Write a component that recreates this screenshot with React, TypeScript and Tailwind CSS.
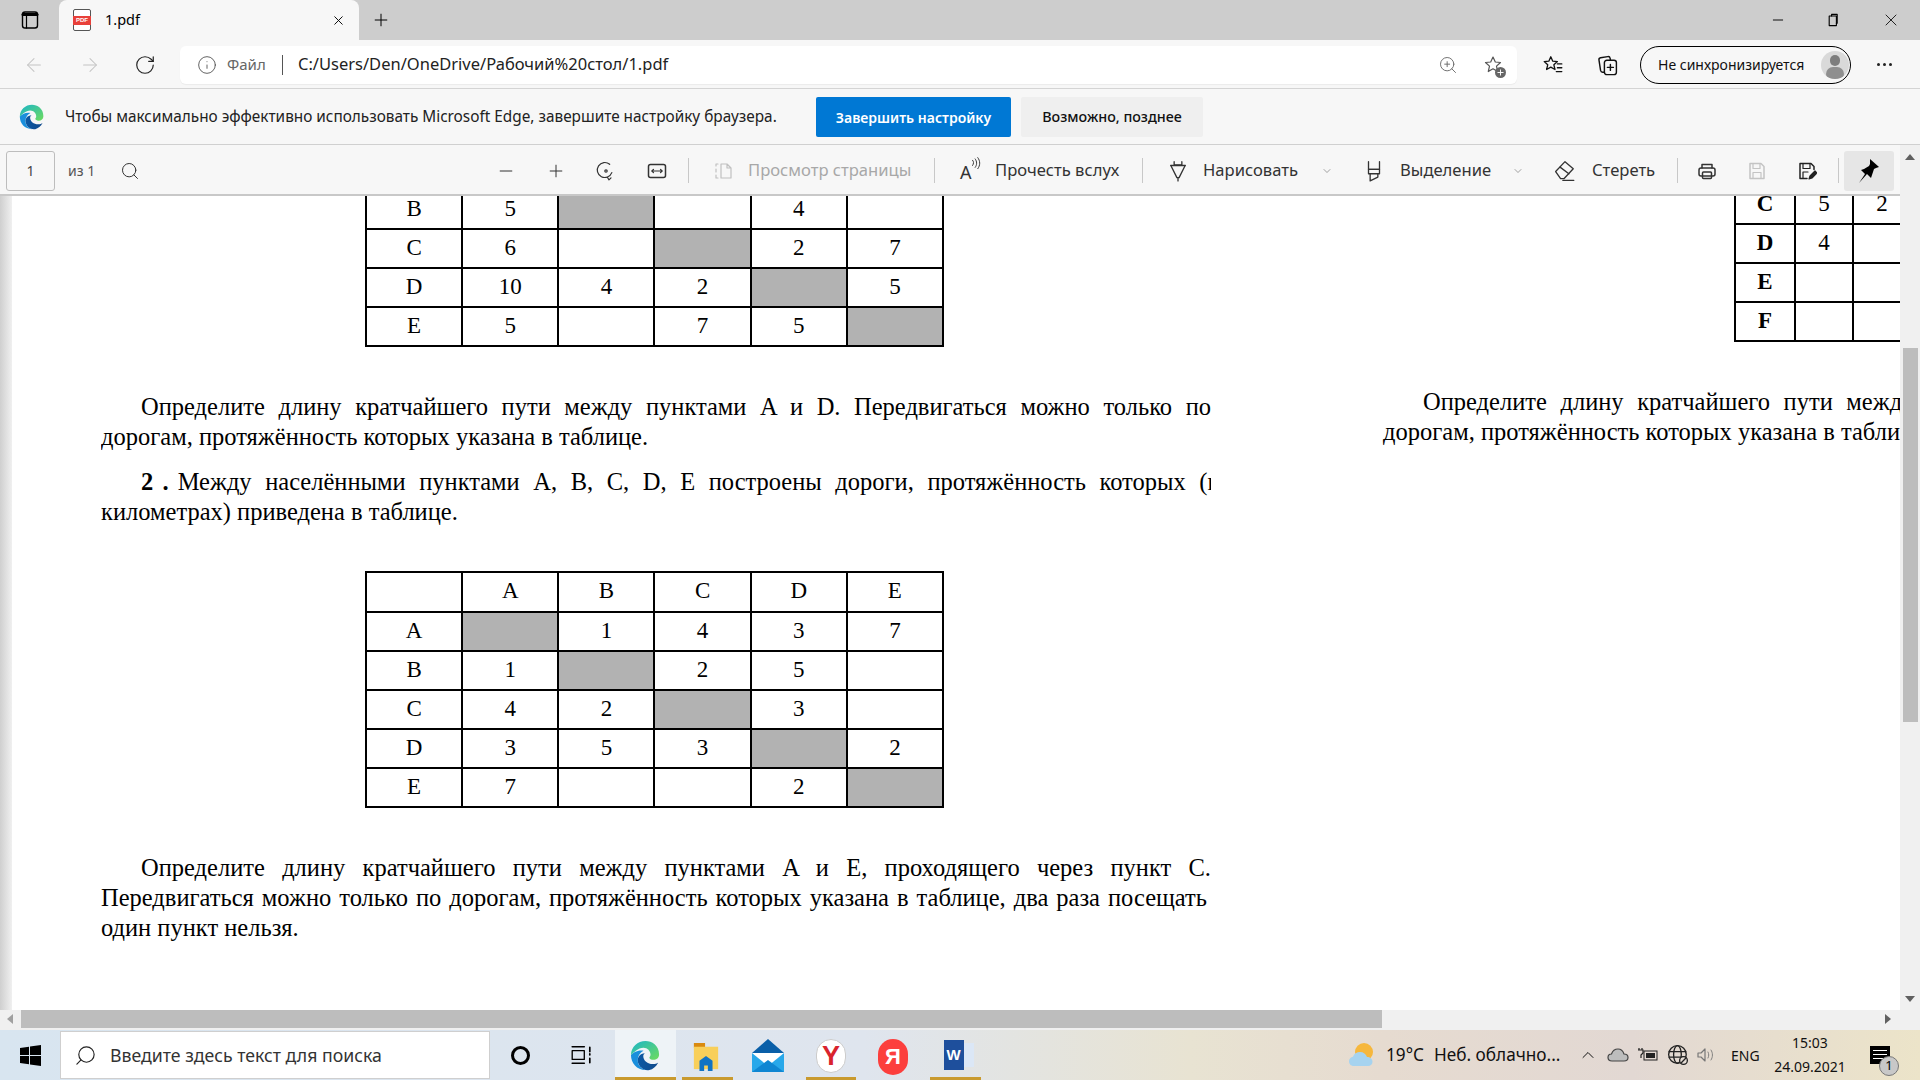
import type { ReactNode } from "react";
import { ArrowLeft, ArrowRight, RotateCw, Info, ZoomIn, Minus, Plus, Search, ChevronDown, ChevronUp, X } from "lucide-react";

const UI_FONT = "font-['Noto_Sans',sans-serif]";
const SERIF = "font-['Liberation_Serif',serif]";

function Ico({ children, size = 20, className = "" }: { children: ReactNode; size?: number; className?: string }) {
  return (
    <svg
      width={size}
      height={size}
      viewBox="0 0 20 20"
      fill="none"
      stroke="currentColor"
      strokeWidth="1.2"
      strokeLinecap="round"
      strokeLinejoin="round"
      className={`shrink-0 ${className}`}
    >
      {children}
    </svg>
  );
}

function EdgeLogo({ size = 28 }: { size?: number }) {
  return (
    <svg width={size} height={size} viewBox="0 0 32 32" className="shrink-0">
      <defs>
        <linearGradient id="edgeTop" x1="0" y1="0" x2="1" y2="1">
          <stop offset="0" stopColor="#1bb5c9" />
          <stop offset="1" stopColor="#6fdc5c" />
        </linearGradient>
        <linearGradient id="edgeLow" x1="0" y1="0" x2="1" y2="0">
          <stop offset="0" stopColor="#0c59a4" />
          <stop offset="1" stopColor="#114a8b" />
        </linearGradient>
      </defs>
      <path d="M1 15.5C1 24 7 31 16 31 10 29 8 25 8 21 8 15 12 12 14 11 8 10 3 13 1 15.5z" fill="#1a8fdc" />
      <path d="M29 23.5c-.5.3-1 .5-1.5.7-1.3.5-2.6.7-4 .7-5.2 0-9.8-3.6-9.8-8.1 0-1.3.7-2.4 1.8-3C10 14 8 18 8 21c0 4 2.5 7.5 6 9.2 2 .9 4 1.3 6 .8 3.6-.7 7-3.5 9-7.5z" fill="url(#edgeLow)" />
      <path d="M1 15.5C1 7 8 1 16 1c6.5 0 14 4.5 14 14 0 3.5-2.5 5.5-6 5.5-2 0-4-1-4-2.2 0-.8 1.2-1.3 1.2-3.3C21.2 11.5 18 8 14 8 8 8 4 13 1 15.5z" fill="url(#edgeTop)" />
    </svg>
  );
}

function TabBar() {
  return (
    <div className="flex h-10 items-center bg-[#cdcdcd] text-black">
      <Ico size={20} className="ml-5">
        <rect x="2.5" y="2" width="15" height="16" rx="2.5" strokeWidth="1.4" />
        <path d="M3 4.5h14" strokeWidth="3" />
        <path d="M6.5 5v13" />
      </Ico>
      <div className="ml-[19px] flex h-10 w-[300px] items-center self-end rounded-t-lg bg-[#f7f7f7]">
        <div className="relative ml-[14px] h-[22px] w-[18px] rounded-[2px] border border-[#555] bg-white">
          <span className="absolute left-[-1px] top-[6px] w-[18px] bg-[#e8403a] text-center font-['Liberation_Sans',sans-serif] text-[6px] font-bold leading-[9px] text-white">
            PDF
          </span>
        </div>
        <span className="ml-[14px] w-[216px] text-[14.5px]">1.pdf</span>
        <X size={15} strokeWidth={1.5} className="ml-[10px]" />
      </div>
      <Plus size={20} strokeWidth={1.2} className="ml-[12px]" />
      <Minus size={16} strokeWidth={1.4} className="ml-[1379px]" />
      <Ico size={16} className="ml-[40px]">
        <rect x="4" y="5" width="9" height="12" strokeWidth="1.4" />
        <path d="M7 5V3h7v11h-1" strokeWidth="1.4" />
      </Ico>
      <X size={20} strokeWidth={1} className="ml-[39px]" />
    </div>
  );
}

function AddressBar() {
  return (
    <div className="flex h-[49px] items-center border-b border-[#d4d4d4] bg-[#f7f7f7] pt-[1px]">
      <ArrowLeft size={22} strokeWidth={1.1} className="ml-[23px] text-[#c4c4c4]" />
      <ArrowRight size={22} strokeWidth={1.1} className="ml-[34px] text-[#c4c4c4]" />
      <RotateCw size={22} strokeWidth={1.3} className="ml-[33px] text-[#222]" />
      <div className="ml-[24px] flex h-[38px] w-[1337px] items-center rounded-md bg-white shadow-[0_1px_1px_rgba(0,0,0,0.05)]">
        <Info size={20} strokeWidth={1} className="ml-[17px] text-[#444]" />
        <span className="ml-[10px] w-[44px] text-[15px] text-[#666]">Файл</span>
        <span className="ml-[11px] h-5 w-px bg-[#555]" />
        <span className="ml-[15px] w-[1060px] text-[16.5px] text-[#222]">C:/Users/Den/OneDrive/Рабочий%20стол/1.pdf</span>
        <ZoomIn size={20} strokeWidth={1.1} className="ml-[80px] text-[#666]" />
        <div className="relative ml-[25px] h-5 w-5 text-[#555]">
          <Ico>
            <path d="M10 2l2.3 5 5.2.5-4 3.6 1.2 5.4L10 13.8 5.3 16.5l1.2-5.4-4-3.6L7.7 7z" />
          </Ico>
          <span className="absolute bottom-[-3px] right-[-3px] h-[11px] w-[11px] rounded-full bg-[#666]" />
          <Plus size={9} strokeWidth={2.5} className="absolute bottom-[-2px] right-[-2px] text-white" />
        </div>
      </div>
      <Ico size={22} className="ml-[25px] text-[#111]">
        <path d="M8 2.5l1.8 4 4.2.4-3.2 2.9 1 4.3L8 12l-3.8 2.1 1-4.3L2 6.9l4.2-.4z" />
        <path d="M14 9h4M14 12.5h4M13 16h5" />
      </Ico>
      <Ico size={24} className="ml-[32px] text-[#111]">
        <rect x="7" y="6" width="10" height="12" rx="2" />
        <path d="M7 16H5.500c-1 0-1.500-.6-1.700-1.500L2.500 6c-.2-1 .4-1.800 1.300-2l6-1c1-.1 1.800.4 2 1.400L12 6" />
        <path d="M12 9.500v5M9.500 12h5" />
      </Ico>
      <div className="ml-[20px] flex h-[38px] w-[211px] items-center rounded-full border-[1.5px] border-black">
        <span className="ml-[17px] w-[164px] whitespace-nowrap text-[14px] text-[#111]">Не синхронизируется</span>
        <div className="relative ml-[-1px] h-7 w-7 overflow-hidden rounded-full bg-[#d9d9d9]">
          <span className="absolute left-[9px] top-[4px] h-[11px] w-[10px] rounded-full bg-[#7d7d7d]" />
          <span className="absolute left-[5px] top-[16px] h-[14px] w-[18px] rounded-full bg-[#8f8f8f]" />
        </div>
      </div>
      <div className="ml-[26px] flex gap-[3px]">
        <span className="h-[3px] w-[3px] rounded-full bg-[#222]" />
        <span className="h-[3px] w-[3px] rounded-full bg-[#222]" />
        <span className="h-[3px] w-[3px] rounded-full bg-[#222]" />
      </div>
    </div>
  );
}

function Banner() {
  return (
    <div className="flex h-[56px] items-center border-b border-[#d0d0d0] bg-[#f7f7f7] pt-[1px]">
      <div className="ml-[19px]">
        <EdgeLogo size={26} />
      </div>
      <span className="ml-[20px] w-[751px] whitespace-nowrap text-[15.35px] text-[#222]">
        Чтобы максимально эффективно использовать Microsoft Edge, завершите настройку браузера.
      </span>
      <button className="flex h-10 w-[195px] items-center justify-center rounded-[2px] bg-[#0078d4] text-[14px] font-semibold text-white">
        Завершить настройку
      </button>
      <button className="ml-[10px] flex h-10 w-[182px] items-center justify-center rounded-[2px] bg-[#efefef] text-[14.3px] font-medium text-[#111]">
        Возможно, позднее
      </button>
    </div>
  );
}

function Sep({ className }: { className: string }) {
  return <span className={`h-[25px] w-px bg-[#c8c8c8] ${className}`} />;
}

function PdfToolbar() {
  return (
    <div className="flex h-[51px] items-center border-b-2 border-[#c8c8c8] bg-[#f7f7f7] pt-[2px] text-[16.6px] text-[#333]">
      <div className="ml-[6px] flex h-10 w-[49px] items-center justify-center rounded-[3px] border border-[#bdbdbd] text-[14px] text-[#444]">
        1
      </div>
      <span className="ml-[13px] w-[26px] whitespace-nowrap text-[14px] text-[#555]">из 1</span>
      <Search size={20} strokeWidth={1.2} className="ml-[26px] text-[#333]" />
      <Minus size={20} strokeWidth={1.2} className="ml-[356px]" />
      <Plus size={20} strokeWidth={1.2} className="ml-[30px]" />
      <Ico className="ml-[30px]">
        <path d="M8.500 2.500a7.500 7.500 0 1 0 7 5" transform="rotate(40 10 10)" />
        <path d="M11.500 16.500l1.500 2.300 2-2" />
        <circle cx="10" cy="10" r="1.200" />
      </Ico>
      <Ico className="ml-[31px]">
        <rect x="1.5" y="3.5" width="17" height="13" rx="2" strokeWidth="1.5" />
        <path d="M5 10h10M6.5 8.300L4.800 10l1.700 1.700M13.500 8.300l1.700 1.700-1.700 1.700" />
      </Ico>
      <Sep className="ml-[21px]" />
      <Ico className="ml-[24px] text-[#c0c0c0]">
        <path d="M8 3h6l4 4v10H8zM14 3v4h4" />
        <path d="M5 3H3v2M3 8v3M3 14v3h2" />
      </Ico>
      <span className="ml-[15px] w-[164px] whitespace-nowrap text-[#a8a8a8]">Просмотр страницы</span>
      <Sep className="ml-[22px]" />
      <div className="relative ml-[25px] h-5 w-5">
        <span className="absolute left-0 top-[-1px] text-[18px] leading-6">A</span>
        <Ico size={13} className="absolute right-[-3px] top-[-4px]">
          <path d="M4 5c2 2 2 5 0 8M8 3c3 4 3 9 0 13M12 1c4 5 4 12 0 17" strokeWidth="1.500" />
        </Ico>
      </div>
      <span className="ml-[15px] w-[125px] whitespace-nowrap">Прочесть вслух</span>
      <Sep className="ml-[22px]" />
      <Ico size={22} className="ml-[24px]">
        <path d="M6.500 1.500v3h7v-3" />
        <path d="M3.500 5h13" />
        <path d="M3.500 5l5.500 11h2l5.500-11" />
        <path d="M10 16v3" />
      </Ico>
      <span className="ml-[14px] w-[94px] whitespace-nowrap">Нарисовать</span>
      <ChevronDown size={12} strokeWidth={1.2} className="ml-[24px] text-[#666]" />
      <Ico size={22} className="ml-[30px]">
        <path d="M5 1.500v7h10v-7" />
        <path d="M5 8.500h10M5 8.500v4h10v-4" />
        <path d="M6.500 12.500v6.500l7-3.500v-3" />
      </Ico>
      <span className="ml-[15px] w-[89px] whitespace-nowrap">Выделение</span>
      <ChevronDown size={12} strokeWidth={1.2} className="ml-[23px] text-[#666]" />
      <Ico size={22} className="ml-[30px]">
        <path d="M1.500 10.500L10 1.500l7.500 6.500-8.500 9-3 0z" />
        <path d="M5.500 6.500l8 6" />
        <path d="M8 18.500h10" />
      </Ico>
      <span className="ml-[16px] w-[62px] whitespace-nowrap">Стереть</span>
      <Sep className="ml-[23px]" />
      <Ico className="ml-[19px]">
        <path d="M5 7V3.500h10V7" strokeWidth="1.5" />
        <rect x="2" y="7" width="16" height="8" rx="2" strokeWidth="1.5" />
        <rect x="5.5" y="11" width="9" height="6.5" rx="1" strokeWidth="1.5" />
      </Ico>
      <Ico className="ml-[30px] text-[#c4c4c4]">
        <path d="M3 2.500h11l3 3v12H3z" strokeWidth="1.5" />
        <path d="M6 2.500v5h7v-5M6 17.500v-6h8v6" />
      </Ico>
      <Ico className="ml-[30px] text-[#222]">
        <path d="M10 17.500H3v-15h11l3 3v3" strokeWidth="1.5" />
        <path d="M6 2.500v5h7v-5M6 17v-6h5" />
        <path d="M12 18l1-3 5-5 2 2-5 5z" fill="currentColor" />
      </Ico>
      <Sep className="ml-[21px]" />
      <div className="ml-[5px] flex h-10 w-[50px] items-center justify-center rounded-[3px] bg-[#e6e6e6]">
        <svg width="24" height="26" viewBox="0 0 24 26" className="text-black">
          <path d="M13 1l9 8-3 1-2 1-2 6-1 3-4-4-8 9 6-9-4-4 3-1 5-3 1-2z" fill="currentColor" />
        </svg>
      </div>
    </div>
  );
}

function TableRows({ rows, gray, bold = false }: { rows: string[][]; gray: number[]; bold?: boolean }) {
  return (
    <>
      {rows.map((row, r) => (
        <tr key={r}>
          {row.map((cell, c) => (
            <td
              key={c}
              className={`border-2 border-black p-0 pb-[2px] text-center ${c === gray[r] ? "bg-[#b2b2b2]" : ""} ${
                bold && c === 0 ? "font-bold" : ""
              }`}
            >
              {cell}
            </td>
          ))}
        </tr>
      ))}
    </>
  );
}

function Line({ children, width = 1110, first = false, last = false }: { children: ReactNode; width?: number; first?: boolean; last?: boolean }) {
  return (
    <div
      style={{ width }}
      className={`h-[29.6px] text-justify leading-[29.6px] ${first ? "indent-[40px]" : ""} ${
        last ? "" : "[text-align-last:justify]"
      }`}
    >
      {children}
    </div>
  );
}

function LeftPage() {
  return (
    <div className={`-mt-[7px] w-[1371px] shrink-0 pl-[89px] text-[24.5px] text-black ${SERIF}`}>
      <table className="ml-[264px] h-[158px] w-[579px] table-fixed border-collapse text-[23px] leading-none">
        <tbody>
          <TableRows
            rows={[
              ["B", "5", "", "", "4", ""],
              ["C", "6", "", "", "2", "7"],
              ["D", "10", "4", "2", "", "5"],
              ["E", "5", "", "7", "5", ""],
            ]}
            gray={[2, 3, 4, 5]}
          />
        </tbody>
      </table>
      <div className="mt-[45px] w-[1110px] overflow-hidden">
        <Line first>Определите длину кратчайшего пути между пунктами A и D. Передвигаться можно только по</Line>
        <Line last>дорогам, протяжённость которых указана в таблице.</Line>
      </div>
      <div className="mt-[16px] w-[1110px] overflow-hidden">
        <Line first width={1118}>
          <span className="inline-block indent-0 [word-spacing:3px]">
            <b>2 .</b> Между
          </span>{" "}
          населёнными пунктами A, B, C, D, E построены дороги, протяжённость которых (в
        </Line>
        <Line last>километрах) приведена в таблице.</Line>
      </div>
      <table className="ml-[264px] mt-[45px] h-[237px] w-[579px] table-fixed border-collapse text-[23px] leading-none">
        <tbody>
          <TableRows
            rows={[
              ["", "A", "B", "C", "D", "E"],
              ["A", "", "1", "4", "3", "7"],
              ["B", "1", "", "2", "5", ""],
              ["C", "4", "2", "", "3", ""],
              ["D", "3", "5", "3", "", "2"],
              ["E", "7", "", "", "2", ""],
            ]}
            gray={[-1, 1, 2, 3, 4, 5]}
          />
        </tbody>
      </table>
      <div className="mt-[45px] w-[1110px]">
        <Line first>Определите длину кратчайшего пути между пунктами A и E, проходящего через пункт C.</Line>
        <Line width={1106}>Передвигаться можно только по дорогам, протяжённость которых указана в таблице, два раза посещать</Line>
        <Line last>один пункт нельзя.</Line>
      </div>
    </div>
  );
}

function RightPage() {
  return (
    <div className={`-mt-[12px] w-[1110px] shrink-0 text-[24.5px] text-black ${SERIF}`}>
      <table className="ml-[351px] h-[158px] w-[300px] table-fixed border-collapse text-[23px] leading-none">
        <colgroup>
          <col className="w-[60px]" />
          <col className="w-[58px]" />
          <col className="w-[58px]" />
          <col className="w-[124px]" />
        </colgroup>
        <tbody>
          <TableRows
            rows={[
              ["C", "5", "2", ""],
              ["D", "4", "", ""],
              ["E", "", "", ""],
              ["F", "", "", ""],
            ]}
            gray={[-1, -1, -1, -1]}
            bold
          />
        </tbody>
      </table>
      <div className="mt-[45px]">
        <Line first>Определите длину кратчайшего пути между пунктами A и D. Передвигаться можно только по</Line>
        <Line last>дорогам, протяжённость которых указана в таблице.</Line>
      </div>
    </div>
  );
}

function VScroll() {
  return (
    <div className="flex w-5 flex-col items-center bg-[#f0f0f0] pt-[9px]">
      <ChevronUpTri />
      <div className="mt-[188px] h-[374px] w-[15px] bg-[#bdbdbd]" />
      <div className="mt-auto mb-[8px] h-0 w-0 border-x-[5px] border-t-[6px] border-x-transparent border-t-[#606060]" />
    </div>
  );
}

function ChevronUpTri() {
  return <div className="h-0 w-0 border-x-[5px] border-b-[6px] border-x-transparent border-b-[#606060]" />;
}

function HScroll() {
  return (
    <div className="flex h-5 items-start bg-[#f0f0f0]">
      <div className="ml-[7px] mt-[4px] h-0 w-0 border-y-[5px] border-r-[6px] border-y-transparent border-r-[#a0a0a0]" />
      <div className="ml-[8px] h-[18px] w-[1361px] bg-[#bdbdbd]" />
      <div className="ml-[503px] mt-[4px] h-0 w-0 border-y-[5px] border-l-[6px] border-y-transparent border-l-[#606060]" />
    </div>
  );
}

function TrayIcons() {
  return (
    <>
      <svg width="30" height="30" viewBox="0 0 30 30" className="ml-[366px] shrink-0">
        <circle cx="17" cy="12" r="9" fill="#f6b73c" />
        <path d="M7 26c-3.500 0-5-2.500-5-4.800 0-2.400 1.800-4.200 4-4.500C7 13.500 10 12 13 12c3.500 0 6 2 7 5 3 0 5.500 2 5.500 4.700 0 2.500-1.800 4.300-4.500 4.300z" fill="#a6d3ef" />
      </svg>
      <span className="ml-[9px] w-[48px] whitespace-nowrap text-[17.2px]">19°C</span>
      <span className="w-[126px] whitespace-nowrap text-[17.2px]">Неб. облачно...</span>
      <ChevronUp size={20} strokeWidth={1.2} className="ml-[18px]" />
      <svg width="22" height="16" viewBox="0 0 22 16" className="ml-[9px] shrink-0">
        <path d="M5 14c-3 0-4-2-4-3.500C1 8.500 2.500 7 4.500 7 5.500 4 8 2 11 2s5 2 6 5c2.500 0 4 1.500 4 3.500S19.500 14 17 14z" fill="#bdbdbd" stroke="#444" strokeWidth="1.200" />
      </svg>
      <svg width="20" height="16" viewBox="0 0 20 16" className="ml-[9px] shrink-0">
        <rect x="6" y="4" width="13" height="9" fill="none" stroke="#222" />
        <rect x="8" y="6" width="9" height="5" fill="#222" />
        <path d="M1 1v2M4 1v2M0 3h5v3l-2 2v3" fill="none" stroke="#222" strokeWidth="1.200" />
      </svg>
      <Ico size={22} className="ml-[9px] text-[#222]">
        <circle cx="9.500" cy="9.500" r="8" />
        <ellipse cx="9.500" cy="9.500" rx="3.500" ry="8" />
        <path d="M2 7h15M2 12h15" />
        <circle cx="15" cy="15" r="3.500" fill="#e4dcd4" />
        <path d="M13 17l4-4" />
      </Ico>
      <Ico size={20} className="ml-[7px] text-[#777]">
        <path d="M2 8h3l4-4v12l-4-4H2z" />
        <path d="M12 7c1 2 1 4 0 6M15 5c2 3 2 7 0 10" strokeWidth="0.9" />
      </Ico>
      <span className="ml-[15px] w-[30px] whitespace-nowrap text-[14px]">ENG</span>
      <div className="ml-[13px] flex w-[72px] flex-col items-center text-[14px] leading-[24px]">
        <span>15:03</span>
        <span>24.09.2021</span>
      </div>
      <div className="relative ml-[24px] h-[18px] w-[20px] bg-black">
        <span className="absolute left-[3px] top-[4px] h-px w-[14px] bg-white" />
        <span className="absolute left-[3px] top-[8px] h-px w-[14px] bg-white" />
        <span className="absolute left-[3px] top-[12px] h-px w-[14px] bg-white" />
        <span className="absolute left-[9px] top-[10px] flex h-[20px] w-[20px] items-center justify-center rounded-full border border-[#777] bg-[#c8c8c8] text-[13px] text-black">
          1
        </span>
      </div>
    </>
  );
}

function Taskbar() {
  return (
    <div className="flex h-[50px] items-center bg-[linear-gradient(90deg,#d8e5f0_0%,#dfe5ee_45%,#e8e3d2_62%,#e6dbd0_72%,#e2d8d3_85%,#ece4c9_100%)] text-[#111]">
      <svg width="21" height="21" viewBox="0 0 21 21" className="ml-[20px] shrink-0">
        <path d="M0 3l9-1.300V10H0zM10 1.500L21 0v10H10zM0 11h9v8.300L0 18zM10 11h11v10l-11-1.500z" fill="#000" />
      </svg>
      <div className="ml-[19px] flex h-[48px] w-[430px] items-center border border-[#cfcfcf] bg-white">
        <Search size={23} strokeWidth={1.2} className="ml-[13px] -scale-x-100 text-[#222]" />
        <span className="ml-[13px] whitespace-nowrap text-[17.7px] text-[#333]">Введите здесь текст для поиска</span>
      </div>
      <span className="ml-[21px] h-[19px] w-[19px] shrink-0 rounded-full border-[3px] border-black" />
      <Ico size={22} className="ml-[40px] text-black">
        <rect x="2" y="6" width="11" height="8" />
        <path d="M2 2.500h11M2 17.500h11M18 3v4M18 9v1M18 13v4" strokeWidth="1.500" />
      </Ico>
      <div className="ml-[23px] flex h-[50px] w-[61px] flex-col items-center justify-between bg-[#eef3f7] pt-[10px]">
        <EdgeLogo size={31} />
        <span className="h-[3px] w-full bg-[#c99a2e]" />
      </div>
      <div className="ml-[6px] flex h-[50px] w-[51px] flex-col items-center justify-between pt-[11px]">
        <svg width="28" height="32" viewBox="0 0 30 32" className="shrink-0 -translate-x-[2px]">
          <path d="M2 1h12v5H2z" fill="#d98a10" />
          <path d="M2 5h26v24H2z" fill="#f8cf5a" />
          <path d="M8 31V20l7-5 7 5v11h-5v-6h-4v6z" fill="#1173c4" />
        </svg>
        <span className="h-[3px] w-full bg-[#c99a2e]" />
      </div>
      <div className="ml-[11px] flex h-[50px] w-[51px] flex-col items-center pt-[9px]">
        <svg width="32" height="33" viewBox="0 0 32 33" className="shrink-0 -translate-x-[2px]">
          <path d="M16 0L0 14h32z" fill="#0a5fa8" />
          <path d="M0 14h32v19H0z" fill="#28a8ea" />
          <path d="M0 14l16 13L32 14z" fill="#fff" />
          <path d="M0 33l16-12 16 12z" fill="#0f86d2" />
        </svg>
      </div>
      <div className="ml-[11px] flex h-[50px] w-[50px] flex-col items-center justify-between pt-[9px]">
        <div className="flex h-[34px] w-[30px] items-center justify-center rounded-full border border-[#ccc] bg-white font-['Liberation_Sans',sans-serif] text-[27px] font-bold leading-none text-[#d9232d]">
          Y
        </div>
        <span className="h-[3px] w-full bg-[#c99a2e]" />
      </div>
      <div className="ml-[12px] flex h-[50px] w-[50px] flex-col items-center pt-[9px]">
        <div className="flex h-[36px] w-[30px] items-center justify-center rounded-full bg-[#fc3f3d] font-['Liberation_Sans',sans-serif] text-[22px] font-bold leading-none text-white">
          Я
        </div>
      </div>
      <div className="ml-[12px] flex h-[50px] w-[51px] flex-col items-center justify-between pt-[10px]">
        <div className="relative ml-[6px] h-[30px] w-[30px]">
          <div className="absolute right-0 top-[3px] h-[24px] w-[24px] bg-[#dbe7f6]" />
          <div className="absolute left-0 top-0 flex h-[30px] w-[20px] items-center justify-center bg-[#1e4f9c] font-['Liberation_Sans',sans-serif] text-[15px] font-bold text-white">
            W
          </div>
        </div>
        <span className="h-[3px] w-full bg-[#c99a2e]" />
      </div>
      <TrayIcons />
    </div>
  );
}

export default function App() {
  return (
    <div className={`flex h-screen w-[1920px] flex-col overflow-hidden bg-white ${UI_FONT}`}>
      <TabBar />
      <AddressBar />
      <Banner />
      <div className="flex min-h-0 flex-1">
        <div className="flex min-w-0 flex-1 flex-col">
          <PdfToolbar />
          <div className="flex min-h-0 flex-1">
            <div className="w-3 shrink-0 bg-[linear-gradient(90deg,#cfcfcf,#f0f0f0)]" />
            <div className="flex min-w-0 flex-1 overflow-hidden bg-white">
              <LeftPage />
              <RightPage />
            </div>
          </div>
        </div>
        <VScroll />
      </div>
      <HScroll />
      <Taskbar />
    </div>
  );
}
